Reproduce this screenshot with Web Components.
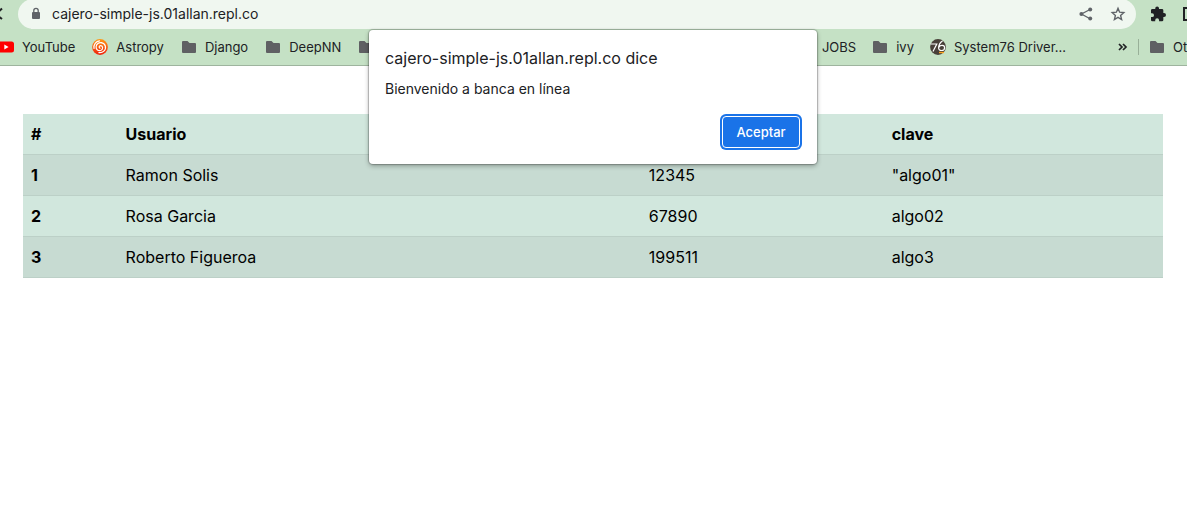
<!DOCTYPE html>
<html lang="es">
<head>
<meta charset="utf-8">
<meta name="viewport" content="width=device-width, initial-scale=1">
<title>Banca en línea</title>
<style>
  html, body { margin: 0; background: #fff; }
  body { font-family: Inter, "Open Sans", sans-serif; color: #202124; overflow-x: hidden; }
</style>
</head>
<body>
<browser-toolbar>
  <address-bar slot="address" value="cajero-simple-js.01allan.repl.co"></address-bar>
  <book-mark icon="youtube">YouTube</book-mark>
  <book-mark icon="astropy">Astropy</book-mark>
  <book-mark icon="folder">Django</book-mark>
  <book-mark icon="folder">DeepNN</book-mark>
  <book-mark icon="folder"></book-mark>
  <book-mark slot="end" icon="none">JOBS</book-mark>
  <book-mark slot="end" icon="folder">ivy</book-mark>
  <book-mark slot="end" icon="system76">System76 Driver...</book-mark>
  <book-mark slot="other" icon="folder">Ot</book-mark>
</browser-toolbar>
<user-table></user-table>
<alert-dialog>
  <span slot="title">cajero-simple-js.01allan.repl.co dice</span>
  <span slot="message">Bienvenido a banca en línea</span>
</alert-dialog>

<script>
const icons = {
  none: '',
  folder: '<svg width="16" height="16" viewBox="0 0 16 16"><path fill="#5f6063" d="M2 2h4.500l2 2H14a1 1 0 0 1 1 1v8a1 1 0 0 1-1 1H2a1 1 0 0 1-1-1V3a1 1 0 0 1 1-1z"/></svg>',
  youtube: '<svg width="16" height="16" viewBox="0 0 16 16"><rect y="2.500" width="16" height="11" rx="2.500" fill="#f00"/><path fill="#fff" d="M6.300 5.500v5L10.600 8z"/></svg>',
  astropy: '<svg width="16" height="16" viewBox="0 0 16 16"><defs><linearGradient id="g" x2="0" y2="1"><stop stop-color="#ff9a18"/><stop offset="1" stop-color="#f0200c"/></linearGradient></defs><circle cx="8" cy="8" r="7.900" fill="url(#g)"/><g fill="none" stroke="#fff" stroke-width="1.200" stroke-linecap="round"><path d="M8 9.300C6.600 8.600 7 6.500 8.800 6.600c2.300.2 2.400 3.600.3 4.700-2.700 1.300-5.300-.8-5-3.600.3-2.700 2.700-4.400 5.200-4"/><path d="M9.300 3.700c4.200.5 5.600 5.500 2.600 8.400-1.500 1.400-3.300 1.800-5 1.500M2 9.500C1.300 5.500 4 2.200 7.500 1.800"/></g></svg>',
  system76: '<svg width="16" height="16" viewBox="0 0 16 16"><circle cx="8" cy="8" r="7.900" fill="#484039"/><g fill="none" stroke="#fff" stroke-width="1.200"><path d="M.5 5h6.300L3 12.500M12.500 2C10 3.500 8.700 6 8.600 9c0 3.400 6 3.400 6-.3 0-2.900-4.300-3-5.600-.5"/></g><path d="M9 13.500h5" stroke="#ffa51f" stroke-width="1.400"/></svg>'
};

class BookMark extends HTMLElement {
  connectedCallback() {
    this.attachShadow({mode: 'open'}).innerHTML = `
      <style>
        :host { display: block; flex: none; }
        a { display: flex; align-items: center; gap: 8px; min-height: 20px; color: #202124; text-decoration: none; font-size: 13px; line-height: 20px; white-space: nowrap; }
        svg { display: block; flex: none; }
      </style>
      <a href="#">${icons[this.getAttribute('icon')]}<slot></slot></a>`;
  }
}

class AddressBar extends HTMLElement {
  connectedCallback() {
    this.attachShadow({mode: 'open'}).innerHTML = `
      <style>
        :host { display: flex; align-items: center; flex: 1; min-width: 0; height: 30px; box-sizing: border-box; padding: 0 10px; border-radius: 15px; background: #f0f7f0; }
        svg { display: block; flex: none; }
        input { flex: 1; min-width: 0; margin: 0 8px; padding: 0; border: 0; outline: 0; background: none; color: #202124; font: 14px/20px Inter, sans-serif; }
        button { margin: 0; padding: 0; border: 0; background: none; }
        .actions { display: flex; gap: 16px; }
      </style>
      <svg width="16" height="16" viewBox="0 0 16 16"><rect x="4" y="6" width="8" height="7" rx="1" fill="#5f6368"/><path d="M5.800 6.500V4.600a2.200 2.200 0 0 1 4.400 0v1.900" fill="none" stroke="#5f6368" stroke-width="1.300"/></svg>
      <input aria-label="Dirección" value="${this.getAttribute('value')}">
      <div class="actions">
        <button aria-label="Compartir"><svg width="16" height="16" viewBox="0 0 16 16"><path d="M12 3.500 3.500 8l8.500 4.700" fill="none" stroke="#5f6368" stroke-width="1.300"/><g fill="#5f6368"><circle cx="12.200" cy="3.400" r="2"/><circle cx="3.400" cy="8" r="2"/><circle cx="12.200" cy="12.600" r="2"/></g></svg></button>
        <button aria-label="Añadir a marcadores"><svg width="16" height="16" viewBox="0 0 16 16"><path d="m8 2.300 1.600 3.900 4.200.4-3.200 2.800 1 4.200L8 11.400l-3.600 2.200 1-4.200-3.200-2.800 4.200-.4z" fill="none" stroke="#5f6368" stroke-width="1.400"/></svg></button>
      </div>`;
  }
}

class BrowserToolbar extends HTMLElement {
  connectedCallback() {
    this.attachShadow({mode: 'open'}).innerHTML = `
      <style>
        :host { display: block; overflow: hidden; background: #c5e1c5; border-bottom: 1px solid #9eb49e; }
        button { margin: 0; padding: 0; border: 0; background: none; flex: none; color: #202124; }
        svg { display: block; }
        .nav { display: flex; align-items: center; margin-top: -1px; }
        .back { width: 18px; }
        .tools { display: flex; gap: 17px; width: 37px; padding-left: 14px; }
        .marks { display: flex; align-items: center; height: 36px; margin-left: -2px; }
        .group { display: flex; gap: 17px; }
        .end { margin-left: auto; gap: 16px; }
        .more { margin: 0 10px 0 52px; }
        .other { border-left: 1px solid #98b098; height: 16px; width: 38px; padding-left: 10px; display: flex; align-items: center; }
      </style>
      <div class="nav">
        <button class="back" aria-label="Atrás"><svg width="4" height="16" viewBox="0 0 4 16"><path d="M2 2.500-4 8.300 2 13" fill="none" stroke="#202124" stroke-width="2"/></svg></button>
        <slot name="address"></slot>
        <div class="tools">
          <button aria-label="Extensiones"><svg width="16" height="16" viewBox="0 0 24 24"><path fill="#202124" d="M21 10.500h-1V6.500a2 2 0 0 0-2-2h-4.500v-1a2.800 2.800 0 0 0-5.600 0v1H3.500a2 2 0 0 0-2 2v4.300h1.600a2.900 2.900 0 0 1 0 5.800H1.500V21a2 2 0 0 0 2 2h4.300v-1.600a2.900 2.900 0 0 1 5.800 0V23H18a2 2 0 0 0 2-2v-4.500h1a3 3 0 0 0 0-6z"/></svg></button>
          <button aria-label="Panel lateral"><svg width="14" height="14" viewBox="0 0 14 14"><path d="M1 1h12v12H1z" fill="none" stroke="#202124" stroke-width="2"/></svg></button>
        </div>
      </div>
      <div class="marks">
        <div class="group"><slot></slot></div>
        <div class="group end"><slot name="end"></slot></div>
        <button class="more" aria-label="Más marcadores"><svg width="10" height="10" viewBox="0 0 10 10"><path d="m1 2 3 3-3 3M5 2l3 3-3 3" fill="none" stroke="#202124" stroke-width="1.700"/></svg></button>
        <div class="other"><slot name="other"></slot></div>
      </div>`;
  }
}

class UserTable extends HTMLElement {
  connectedCallback() {
    this.attachShadow({mode: 'open'}).innerHTML = `
      <style>
        :host { display: block; margin: 48px 24px 48px 23px; color: #000; }
        table { width: 100%; table-layout: fixed; border-collapse: collapse; background: #d1e7dd; font-size: 16px; line-height: 24px; }
        th, td { padding: 8px; text-align: left; border-bottom: 1px solid #bcd0c7; }
        th { font-weight: 700; }
        tbody tr:nth-child(odd) { background: #c7dbd2; }
        .id { width: 8.300%; } .user { width: 45.900%; } .account { width: 21.300%; }
      </style>
      <table>
        <colgroup><col class="id"><col class="user"><col class="account"><col></colgroup>
        <thead><tr><th scope="col">#</th><th scope="col">Usuario</th><th scope="col"></th><th scope="col">clave</th></tr></thead>
        <tbody>
          <tr><th scope="row">1</th><td>Ramon Solis</td><td>12345</td><td>"algo01"</td></tr>
          <tr><th scope="row">2</th><td>Rosa Garcia</td><td>67890</td><td>algo02</td></tr>
          <tr><th scope="row">3</th><td>Roberto Figueroa</td><td>199511</td><td>algo3</td></tr>
        </tbody>
      </table>`;
  }
}

class AlertDialog extends HTMLElement {
  connectedCallback() {
    this.attachShadow({mode: 'open'}).innerHTML = `
      <style>
        :host { position: absolute; top: 30px; left: 0; right: 1px; margin: 0 auto; width: 448px; max-width: 100%; box-sizing: border-box; padding: 16px; display: block; background: #fff; border-radius: 4px; box-shadow: 0 0 1px 1px rgba(0,0,0,.22), 0 2px 5px rgba(0,0,0,.3); }
        h1 { margin: 0; font-size: 16px; font-weight: 400; line-height: 24px; }
        p { margin: 9px 0 17px; font-size: 14px; line-height: 20px; }
        .actions { display: flex; justify-content: flex-end; }
        button { margin: 0 1px; min-width: 78px; height: 32px; padding: 0 13px; border: 1px solid #fff; border-radius: 4px; background: #1a73e8; color: #fff; font: 500 13px/20px Inter, sans-serif; box-shadow: 0 0 0 2px #1a73e8; }
      </style>
      <div role="alertdialog" aria-labelledby="title" aria-describedby="message">
        <h1 id="title"><slot name="title"></slot></h1>
        <p id="message"><slot name="message"></slot></p>
        <div class="actions"><button>Aceptar</button></div>
      </div>`;
  }
}

customElements.define('book-mark', BookMark);
customElements.define('address-bar', AddressBar);
customElements.define('browser-toolbar', BrowserToolbar);
customElements.define('user-table', UserTable);
customElements.define('alert-dialog', AlertDialog);
</script>
</body>
</html>
